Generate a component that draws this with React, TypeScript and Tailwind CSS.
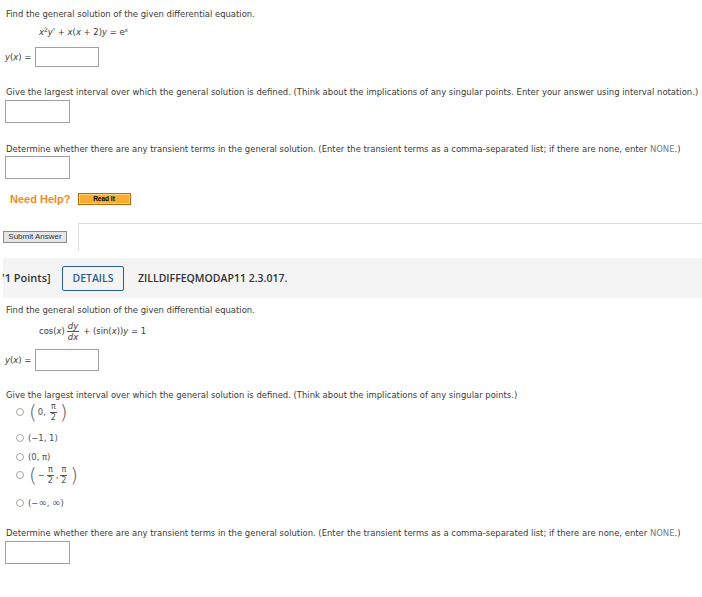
import React from "react"

const Box = ({ w = "w-[65px]", h = "h-[23px]" }: { w?: string; h?: string }) => (
  <div className={`${w} ${h} border border-[#a0a0a0] bg-white`} />
)

const Frac = ({ top, bottom, italic = false, size = "text-[8px]" }: { top: string; bottom: string; italic?: boolean; size?: string }) => (
  <span className={`inline-flex flex-col items-center mx-[2px] leading-[10px] ${size} ${italic ? "italic" : ""}`}>
    <span className="border-b border-[#555] px-[1px]">{top}</span>
    <span>{bottom}</span>
  </span>
)

const Radio = () => (
  <span className="inline-block w-[8px] h-[8px] rounded-full border border-[#a5a5a5] mr-[4px] shrink-0" />
)

const Paren = ({ c }: { c: string }) => (
  <span className="text-[20px] leading-[20px] font-extralight text-[#555] mx-[1px]">{c}</span>
)

export default function App() {
  return (
    <div className="w-[702px] h-[597px] bg-white overflow-hidden text-[8.45px] leading-[10px] text-[#3a3a3a] font-['DejaVu_Sans',Verdana,sans-serif]">
      {/* question 1 */}
      <div className="pl-[6px] pt-[9px]">
        <p>Find the general solution of the given differential equation.</p>
        <p className="mt-[8px] ml-[33px]">
          <i>x</i>
          <sup className="text-[6px]">2</sup>
          <i>y</i>' + <i>x</i>(<i>x</i> + 2)<i>y</i> = e<sup className="text-[6px]"><i>x</i></sup>
        </p>
      </div>
      <div className="flex items-center mt-[10px] pl-[5px]">
        <span className="w-[30px]">
          <i>y</i>(<i>x</i>) =
        </span>
        <Box w="w-[64px]" h="h-[20px]" />
      </div>

      <p className="mt-[20px] pl-[6px] whitespace-nowrap">
        Give the largest interval over which the general solution is defined. (Think about the implications of any singular points. Enter your answer using interval notation.)
      </p>
      <div className="mt-[3px] pl-[5px]">
        <Box />
      </div>

      <p className="mt-[21px] pl-[6px] whitespace-nowrap">
        Determine whether there are any transient terms in the general solution. (Enter the transient terms as a comma-separated list; if there are none, enter <span className="text-[#6f7d8c]">NONE</span>.)
      </p>
      <div className="mt-[2px] pl-[5px]">
        <Box />
      </div>

      {/* help */}
      <div className="flex items-center mt-[13px] pl-[10px] h-[14px]">
        <span className="font-['Liberation_Sans',Arial,sans-serif] font-bold text-[11px] text-[#ef8a22] mr-[7px]">Need Help?</span>
        <span className="flex items-center justify-center w-[53px] h-[12px] bg-[#f9ad35] border border-[#b86a05] shadow-[inset_0_0_0_1px_#ffd27a] font-['Liberation_Sans',Arial,sans-serif] font-bold text-[6.5px] text-black">
          Read It
        </span>
      </div>

      {/* submit */}
      <div className="flex mt-[17px]">
        <div className="pt-[8px] pl-[3px] w-[78px]">
          <button className="w-[64px] h-[12px] bg-[#e6e6e6] border border-[#8a8a8a] font-['Liberation_Sans',Arial,sans-serif] text-[8px] leading-[10px] text-[#333]">
            Submit Answer
          </button>
        </div>
        <div className="flex-1 h-[27px] border-t border-l border-[#dcdcdc]" />
      </div>

      {/* question 2 header */}
      <div className="mt-[8px] ml-[3px] h-[40px] bg-[#f4f4f4] flex items-center font-['Open_Sans',sans-serif] text-[#333]">
        <span className="font-semibold text-[11px] -ml-[1px] w-[60px]">'1 Points]</span>
        <span className="flex items-center justify-center w-[62px] h-[25px] border border-[#2c5f8d] rounded-[2px] text-[#2c5f8d] text-[10.5px] font-semibold">
          DETAILS
        </span>
        <span className="ml-[14px] font-semibold text-[10.5px]">ZILLDIFFEQMODAP11 2.3.017.</span>
      </div>

      <div className="pl-[6px] pt-[7px]">
        <p>Find the general solution of the given differential equation.</p>
        <div className="mt-[4px] ml-[33px] flex items-center h-[24px]">
          <span>
            cos(<i>x</i>)
          </span>
          <Frac top="dy" bottom="dx" italic size="text-[8.5px]" />
          <span className="ml-[2px]">
            + (sin(<i>x</i>))<i>y</i> = 1
          </span>
        </div>
      </div>
      <div className="flex items-center mt-[6px] pl-[5px]">
        <span className="w-[30px]">
          <i>y</i>(<i>x</i>) =
        </span>
        <Box w="w-[64px]" h="h-[22px]" />
      </div>

      <p className="mt-[19px] pl-[6px] whitespace-nowrap">
        Give the largest interval over which the general solution is defined. (Think about the implications of any singular points.)
      </p>

      <div className="pl-[16px] mt-[2px] flex flex-col text-[#4a4f5a]">
        <div className="flex items-center h-[20px]">
          <Radio />
          <Paren c="(" />
          <span>0,</span>
          <span className="ml-[2px]">
            <Frac top="π" bottom="2" />
          </span>
          <Paren c=")" />
        </div>
        <div className="flex items-center h-[10px] mt-[11px]">
          <Radio />
          <span>(−1, 1)</span>
        </div>
        <div className="flex items-center h-[10px] mt-[9px]">
          <Radio />
          <span>(0, π)</span>
        </div>
        <div className="flex items-center h-[20px] mt-[3px]">
          <Radio />
          <Paren c="(" />
          <span>−</span>
          <Frac top="π" bottom="2" />
          <span>,</span>
          <Frac top="π" bottom="2" />
          <Paren c=")" />
        </div>
        <div className="flex items-center h-[10px] mt-[13px]">
          <Radio />
          <span>
            (−<span className="text-[10px]">∞</span>, <span className="text-[10px]">∞</span>)
          </span>
        </div>
      </div>

      <p className="mt-[20px] pl-[6px] whitespace-nowrap">
        Determine whether there are any transient terms in the general solution. (Enter the transient terms as a comma-separated list; if there are none, enter <span className="text-[#6f7d8c]">NONE</span>.)
      </p>
      <div className="mt-[3px] pl-[5px]">
        <Box />
      </div>
    </div>
  )
}
